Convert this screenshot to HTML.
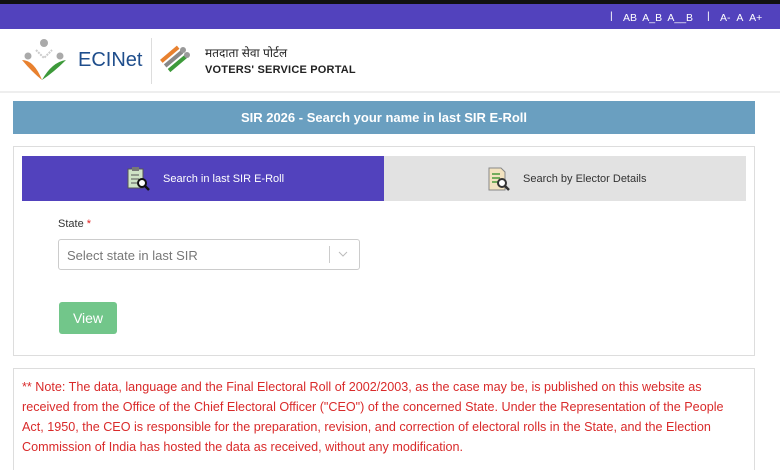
<!DOCTYPE html>
<html><head><meta charset="utf-8"><style>
*{box-sizing:border-box;margin:0;padding:0}
html,body{width:780px;height:470px;overflow:hidden}
body{background:#fff;font-family:"Liberation Sans",sans-serif;position:relative}
.abs{position:absolute}
</style></head><body>
<div class="abs" style="left:0;top:0;width:780px;height:4px;background:#111"></div>
<div class="abs" style="left:0;top:4px;width:780px;height:25px;background:#5242bd;color:#fff;font-size:10.5px">
 <span class="abs" style="left:610px;top:6px">|</span>
 <span class="abs" style="left:623px;top:8px">AB&nbsp; A_B&nbsp; A__B</span>
 <span class="abs" style="left:707px;top:6px">|</span>
 <span class="abs" style="left:720px;top:8px">A-&nbsp;&nbsp;A&nbsp;&nbsp;A+</span>
</div>
<svg class="abs" style="left:20px;top:38px" width="48" height="46" viewBox="0 0 48 46">
 <circle cx="24" cy="5" r="4" fill="#aaa"/><circle cx="8" cy="18" r="3.5" fill="#aaa"/><circle cx="40" cy="18" r="3.5" fill="#aaa"/>
 <path d="M2 22 Q14 22 22 42 Q12 34 2 22Z" fill="#e8812f"/>
 <path d="M46 22 Q32 24 22 42 Q34 34 46 22Z" fill="#3d9a3a"/>
 <path d="M16 12 L24 20 L32 12" stroke="#ccc" fill="none" stroke-width="2" stroke-dasharray="2 1"/>
</svg>
<div class="abs" style="left:78px;top:49px;font-size:20px;color:#1f4e8c">ECINet</div>
<div class="abs" style="left:151px;top:38px;width:1px;height:46px;background:#ddd"></div>
<svg class="abs" style="left:157px;top:42px" width="36" height="34" viewBox="0 0 36 34">
 <g transform="rotate(-40 18 17)"><rect x="6" y="8" width="22" height="4" fill="#e8812f"/><rect x="6" y="14" width="22" height="4" fill="#888"/><rect x="6" y="20" width="22" height="4" fill="#3d9a3a"/></g>
 <circle cx="26" cy="8" r="3" fill="#999"/><circle cx="30" cy="13" r="3" fill="#999"/>
</svg>
<div class="abs" style="left:205px;top:44px;font-size:12px;color:#222;font-family:'Liberation Sans','Noto Sans CJK SC',sans-serif">मतदाता सेवा पोर्टल</div>
<div class="abs" style="left:205px;top:64px;font-size:11px;font-weight:bold;color:#222;letter-spacing:0.2px">VOTERS' SERVICE PORTAL</div>
<div class="abs" style="left:0;top:91px;width:780px;height:2px;background:#eee"></div>
<div class="abs" style="left:13px;top:101px;width:742px;height:33px;background:#6a9fc0;color:#fff;font-size:13px;font-weight:bold;text-align:center;line-height:33px">SIR 2026 - Search your name in last SIR E-Roll</div>
<div class="abs" style="left:13px;top:146px;width:742px;height:210px;border:1px solid #ddd"></div>
<div class="abs" style="left:22px;top:156px;width:362px;height:45px;background:#5242bd"></div>
<div class="abs" style="left:384px;top:156px;width:362px;height:45px;background:#e2e2e2"></div>
<svg class="abs" style="left:126px;top:166px" width="26" height="26" viewBox="0 0 26 26"><rect x="2" y="3" width="15" height="19" fill="#cfe3c6" stroke="#555"/><rect x="6" y="1" width="7" height="4" fill="#777"/><path d="M5 9h8M5 13h8M5 17h6" stroke="#555"/><circle cx="16" cy="17" r="4" fill="#fff" stroke="#111" stroke-width="2"/><path d="M19 20l4 4" stroke="#111" stroke-width="2.5"/></svg>
<div class="abs" style="left:163px;top:173px;font-size:11px;color:#fff">Search in last SIR E-Roll</div>
<svg class="abs" style="left:486px;top:166px" width="26" height="26" viewBox="0 0 26 26"><path d="M3 2h12l4 4v18H3z" fill="#f3e3c0" stroke="#888"/><path d="M6 8h8M6 12h8M6 16h6" stroke="#4a9a3a" stroke-width="1.5"/><circle cx="16" cy="17" r="4" fill="#fff" stroke="#333" stroke-width="2"/><path d="M19 20l4 4" stroke="#333" stroke-width="2.5"/></svg>
<div class="abs" style="left:523px;top:173px;font-size:11px;color:#333">Search by Elector Details</div>
<div class="abs" style="left:58px;top:218px;font-size:11px;color:#333">State <span style="color:#e02020">*</span></div>
<div class="abs" style="left:58px;top:239px;width:302px;height:31px;border:1px solid #ccc;border-radius:3px;font-size:13px;color:#777;padding:8px 0 0 8px">Select state in last SIR</div>
<div class="abs" style="left:329px;top:246px;width:1px;height:17px;background:#ccc"></div>
<svg class="abs" style="left:338px;top:250px" width="10" height="8"><path d="M1 2l4 4 4-4" stroke="#bbb" fill="none"/></svg>
<div class="abs" style="left:59px;top:302px;width:58px;height:32px;background:#72c68a;border-radius:3px;color:#fff;font-size:14px;text-align:center;line-height:32px">View</div>
<div class="abs" style="left:13px;top:368px;width:742px;height:110px;border:1px solid #ddd;padding:8px 8px;font-size:12.6px;line-height:20px;color:#d92a2a;white-space:nowrap">** Note: The data, language and the Final Electoral Roll of 2002/2003, as the case may be, is published on this website as<br>received from the Office of the Chief Electoral Officer ("CEO") of the concerned State. Under the Representation of the People<br>Act, 1950, the CEO is responsible for the preparation, revision, and correction of electoral rolls in the State, and the Election<br>Commission of India has hosted the data as received, without any modification.</div>
</body></html>
